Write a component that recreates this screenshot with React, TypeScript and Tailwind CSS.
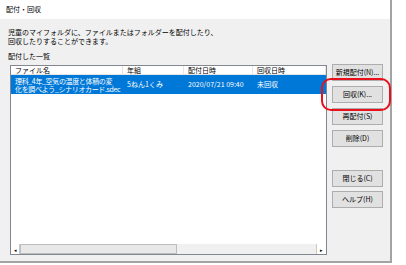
const buttonClass =
  'h-[17px] w-[51px] border border-[#adadad] bg-[#e1e1e1] flex items-center justify-center text-[7px] leading-none text-black'

const columns = [
  { label: 'ファイル名', width: 'w-[112px]' },
  { label: '年組', width: 'w-[61px]' },
  { label: '配付日時', width: 'w-[69px]' },
  { label: '回収日時', width: 'flex-1' },
]

export default function App() {
  return (
    <div className="w-[406px] h-[265px] bg-white relative font-['Noto_Sans_CJK_JP',sans-serif] text-black">
      <div className="w-[392px] h-[263px] border-r-2 border-b-2 border-[#a3a3a3] flex flex-col">
        {/* title bar */}
        <div className="h-[19px] bg-white flex items-center pl-[6px] text-[7px] leading-none">
          配付・回収
        </div>

        {/* body */}
        <div className="flex-1 bg-[#f0f0f0] pl-[8px] pt-[9px] flex flex-col">
          <p className="text-[7px] leading-[9px]">
            児童のマイフォルダに、ファイルまたはフォルダーを配付したり、
            <br />
            回収したりすることができます。
          </p>
          <div className="mt-[6px] text-[7px] leading-[9px]">配付した一覧</div>

          <div className="mt-[4px] flex">
            {/* list view */}
            <div className="ml-[2px] w-[317px] h-[190px] border border-[#828790] bg-white flex flex-col">
              <div className="h-[9px] flex border-b border-[#e5e5e5]">
                {columns.map((c) => (
                  <div
                    key={c.label}
                    className={`${c.width} border-r border-[#e5e5e5] pl-[4px] text-[7px] leading-[9px]`}
                  >
                    {c.label}
                  </div>
                ))}
              </div>
              <div className="h-[19px] bg-[#0078d7] text-white flex items-center text-[7px]">
                <div className="w-[112px] pl-[4px] pr-[2px] leading-[8px] whitespace-nowrap overflow-hidden tracking-[-0.35px]">
                  理科_4年_空気の温度と体積の変
                  <br />
                  化を調べよう_シナリオカード.sdec
                </div>
                <div className="w-[61px] pl-[4px] leading-none">5ねん1くみ</div>
                <div className="w-[69px] pl-[4px] leading-none">2020/07/21 09:40</div>
                <div className="flex-1 pl-[4px] leading-none">未回収</div>
              </div>
              <div className="flex-1" />
              {/* horizontal scrollbar */}
              <div className="h-[10px] bg-[#f0f0f0] flex items-stretch">
                <div className="w-[9px] bg-white border-r border-[#c8c8c8] flex items-center justify-center text-[5px] leading-none">
                  ◂
                </div>
                <div className="w-[157px] bg-[#e8e8e8] border border-[#bdbdbd]" />
                <div className="flex-1" />
                <div className="w-[10px] bg-white border-l border-[#c8c8c8] flex items-center justify-center text-[5px] leading-none">
                  ▸
                </div>
              </div>
            </div>

            {/* buttons */}
            <div className="ml-[5px] -mt-[1px] flex flex-col">
              <div className={buttonClass}>新規配付(N)...</div>
              <div className={`${buttonClass} mt-[5px]`}>回収(K)...</div>
              <div className={`${buttonClass} mt-[5px]`}>再配付(S)</div>
              <div className={`${buttonClass} mt-[5px]`}>削除(D)</div>
              <div className={`${buttonClass} mt-[23px]`}>閉じる(C)</div>
              <div className={`${buttonClass} mt-[4px]`}>ヘルプ(H)</div>
            </div>
          </div>
        </div>
      </div>

      {/* red annotation around the 回収 button */}
      <div className="absolute left-[321px] top-[78px] w-[70px] h-[33px] border-[2.5px] border-[#e8101a] rounded-[10px]" />
    </div>
  )
}
